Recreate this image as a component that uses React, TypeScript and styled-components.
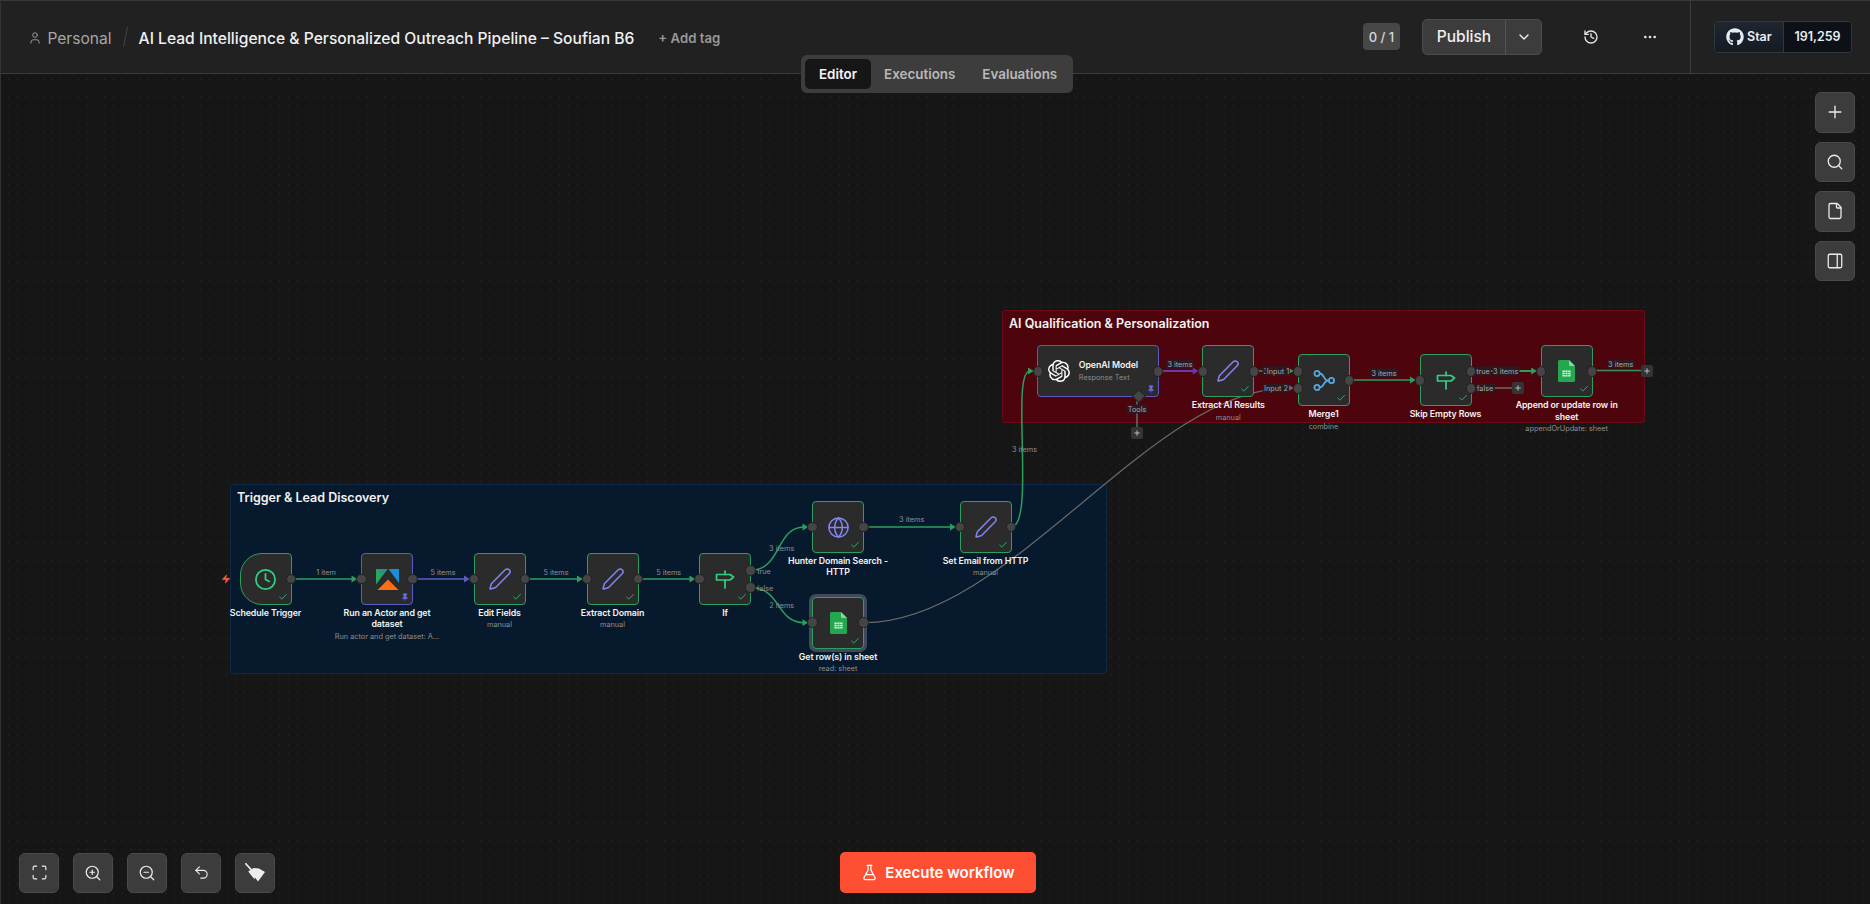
import React from 'react';
import styled, { createGlobalStyle } from 'styled-components';
import { User, ChevronDown, History, Ellipsis, Plus, Search, File, PanelRight, Maximize, ZoomIn, ZoomOut, Undo2, FlaskConical, Clock, Pen, Globe, Pin, Check, Zap } from 'lucide-react';
import { FaGithub } from 'react-icons/fa';
import { SiOpenai } from 'react-icons/si';

const GlobalStyle = createGlobalStyle`
  html, body { margin: 0; padding: 0; background: #161616; }
  body { font-family: Inter, "Noto Sans", sans-serif; overflow: hidden; }
`;

const HEADER_H = 74;
const GREEN = '#2c9f5f';
const PURPLE = '#5c5cc0';
const GRAY = '#6a6a6a';

const Page = styled.div`
  position: relative;
  width: 1870px;
  height: 904px;
  display: flex;
  flex-direction: column;
  overflow: hidden;
  border-left: 1px solid #333;
  box-sizing: border-box;
`;

const Header = styled.header`
  height: ${HEADER_H}px;
  flex: none;
  box-sizing: border-box;
  display: flex;
  align-items: stretch;
  background: #212121;
  border-top: 1px solid #383838;
  border-bottom: 1px solid #3c3c3c;
`;

const HeaderMain = styled.div`
  flex: 1;
  display: flex;
  align-items: center;
  padding-left: 27px;
`;

const Crumbs = styled.div`
  display: flex;
  align-items: center;
  gap: 1px;
  padding-top: 2px;
  color: #a6a6a6;
  font-size: 15.6px;
`;

const Slash = styled.span`
  width: 1px;
  height: 20px;
  margin: 0 13px 0 13px;
  background: #444;
  transform: rotate(11deg);
`;

const Title = styled.div`
  padding-top: 2px;
  color: #f0f0f0;
  font-size: 15.64px;
  font-weight: 500;
  white-space: nowrap;
`;

const AddTag = styled.div`
  margin-left: 24px;
  padding-top: 2px;
  color: #989898;
  font-size: 13.2px;
  font-weight: 600;
`;

const Actions = styled.div`
  margin-left: auto;
  display: flex;
  align-items: center;
  padding-bottom: 1px;
`;

const Count = styled.div`
  width: 37px;
  height: 27px;
  display: flex;
  align-items: center;
  justify-content: center;
  background: #474747;
  border-radius: 4px;
  color: #d8d8d8;
  font-size: 13px;
  font-weight: 500;
  margin-right: 22px;
`;

const PublishGroup = styled.div`
  display: flex;
  height: 36px;
  box-sizing: border-box;
  background: #3c3c3c;
  border: 1px solid #4c4c4c;
  border-radius: 5px;
  color: #f0f0f0;
  margin-right: 37px;
`;

const PublishLabel = styled.div`
  width: 82px;
  display: flex;
  align-items: center;
  justify-content: center;
  font-size: 15.5px;
  font-weight: 500;
`;

const PublishCaret = styled.div`
  width: 35px;
  display: flex;
  align-items: center;
  justify-content: center;
  border-left: 1px solid #555;
`;

const IconSlot = styled.div`
  width: 24px;
  display: flex;
  justify-content: center;
  color: #e6e6e6;
  margin-right: ${p => p.$gap}px;
`;

const StarArea = styled.div`
  width: 180px;
  flex: none;
  box-sizing: border-box;
  border-left: 1px solid #3c3c3c;
  display: flex;
  align-items: center;
  padding-left: 23px;
  padding-bottom: 1px;
`;

const StarBox = styled.div`
  width: 138px;
  height: 32px;
  box-sizing: border-box;
  display: flex;
  border: 1px solid #30363d;
  border-radius: 4px;
  overflow: hidden;
  font-size: 12.5px;
  font-weight: 600;
  color: #e6edf3;
`;

const StarLeft = styled.div`
  width: 69px;
  display: flex;
  align-items: center;
  gap: 3px;
  padding-left: 11px;
  box-sizing: border-box;
  background: linear-gradient(#1f2630, #151b23);
  border-right: 1px solid #30363d;
`;

const StarRight = styled.div`
  flex: 1;
  display: flex;
  align-items: center;
  justify-content: center;
  background: #0d1117;
`;

const Tabs = styled.div`
  position: absolute;
  left: 800px;
  top: 55px;
  width: 272px;
  height: 38px;
  box-sizing: border-box;
  padding: 4px;
  display: flex;
  background: #3d3d3d;
  border-radius: 6px;
  z-index: 5;
`;

const Tab = styled.div`
  height: 30px;
  padding: 0 ${p => p.$pad}px;
  display: flex;
  align-items: center;
  border-radius: 5px;
  font-size: 13.4px;
  font-weight: 600;
  color: ${p => (p.$active ? '#f5f5f5' : '#b8b8b8')};
  background: ${p => (p.$active ? '#161616' : 'transparent')};
`;

const Canvas = styled.main`
  position: relative;
  flex: 1;
  background-color: #161616;
  background-image: radial-gradient(circle, #303030 0.6px, transparent 0.9px);
  background-size: 8.75px 8.75px;
  background-position: 3px 1px;
`;

const Graph = styled.div`
  position: absolute;
  left: -1px;
  top: -${HEADER_H}px;
  width: 1870px;
  height: 904px;
`;

const Placed = styled.div.attrs(p => ({
  style: { left: p.$x, top: p.$y, width: p.$w, height: p.$h },
}))`
  position: absolute;
`;

const Group = styled(Placed)`
  box-sizing: border-box;
  border-radius: 3px;
  background: ${p => p.$bg};
  border: 1px solid ${p => p.$line};
  padding: 5px 6px;
  color: #f2f2f2;
  font-size: 12.5px;
  font-weight: 600;
`;

const EdgeLayer = styled.svg`
  position: absolute;
  left: 0;
  top: 0;
  width: 1870px;
  height: 904px;
  z-index: 2;
  fill: none;
`;

const EdgeLine = styled.path`
  stroke: ${p => p.$color};
  stroke-width: ${p => p.$w || 1.5}px;
  fill: none;
`;

const NodeBox = styled(Placed)`
  box-sizing: border-box;
  z-index: 3;
  display: flex;
  align-items: center;
  justify-content: center;
  background: #2b2b2b;
  border: 1px solid ${p => p.$line};
  border-radius: ${p => (p.$trigger ? '22px 4px 4px 22px' : '4px')};
  ${p => p.$selected && 'box-shadow: 0 0 0 3px #3f4b5c;'}
`;

const Handle = styled.span.attrs(p => ({ style: { top: p.$top } }))`
  position: absolute;
  ${p => (p.$side === 'in' ? 'left: -5.75px;' : 'right: -5.75px;')}
  width: 10.5px;
  height: 10.5px;
  margin-top: -5.25px;
  box-sizing: border-box;
  border-radius: 50%;
  background: #454545;
  border: 1px solid #222;
`;

const Diamond = styled.span`
  position: absolute;
  left: 99.5px;
  bottom: -4.5px;
  width: 7.5px;
  height: 7.5px;
  margin-left: -3.75px;
  background: #454545;
  border: 1px solid #222;
  transform: rotate(45deg);
`;

const Tick = styled.span`
  position: absolute;
  right: 3px;
  bottom: 2px;
  display: flex;
  color: #2fae68;
`;

const PinMark = styled.span`
  position: absolute;
  right: 3px;
  bottom: 3px;
  display: flex;
  color: #6a6ae0;
`;

const NodeCaption = styled.div`
  position: absolute;
  left: 50%;
  top: 100%;
  width: 106px;
  margin-left: -53px;
  padding-top: 3px;
  text-align: center;
`;

const NodeName = styled.div`
  color: #f2f2f2;
  font-size: 8.8px;
  font-weight: 600;
  letter-spacing: -0.1px;
  line-height: 11.3px;
`;

const NodeSub = styled.div`
  color: #8e8e8e;
  font-size: 7.3px;
  line-height: 9px;
  margin-top: 2px;
  white-space: nowrap;
`;

const WideBody = styled.div`
  display: flex;
  align-items: center;
  gap: 8.5px;
  width: 100%;
  padding-left: 10px;
  box-sizing: border-box;
`;

const WideText = styled.div`
  display: flex;
  flex-direction: column;
  gap: 3px;
`;

const WideName = styled.div`
  color: #f2f2f2;
  font-size: 8.8px;
  font-weight: 600;
  letter-spacing: -0.1px;
  line-height: 10px;
`;

const WideSub = styled.div`
  color: #8e8e8e;
  font-size: 7.3px;
  line-height: 9px;
`;

const EdgeLabel = styled.span.attrs(p => ({ style: { left: p.$x, top: p.$y } }))`
  position: absolute;
  z-index: 4;
  transform: translate(-50%, -50%);
  padding: 0 1px;
  font-size: 7.3px;
  line-height: 9px;
  white-space: nowrap;
  color: ${p => (p.$dark ? '#a8a8a8' : '#8f8f8f')};
  background: ${p => (p.$dark ? '#2a1a24' : 'transparent')};
`;

const PlusChip = styled(Placed)`
  z-index: 4;
  display: flex;
  align-items: center;
  justify-content: center;
  background: #343434;
  border-radius: 2px;
  color: #d6d6d6;
`;

const Bolt = styled(Placed)`
  display: flex;
  color: #ff5a3c;
`;

const ToolRail = styled.div`
  position: absolute;
  right: 15px;
  top: 18px;
  display: flex;
  flex-direction: column;
  gap: 9px;
  z-index: 6;
`;

const ToolButton = styled.div`
  width: 40px;
  height: 40.5px;
  box-sizing: border-box;
  display: flex;
  align-items: center;
  justify-content: center;
  background: #3c3c3c;
  border: 1px solid #4a4a4a;
  border-radius: 6px;
  color: #ededed;
`;

const BottomBar = styled.div`
  position: absolute;
  left: 18px;
  bottom: 11px;
  display: flex;
  gap: 14px;
  z-index: 6;
`;

const ExecuteButton = styled.div`
  position: absolute;
  left: 839px;
  bottom: 11px;
  width: 196px;
  height: 41px;
  display: flex;
  align-items: center;
  justify-content: center;
  gap: 7px;
  background: #fe4f32;
  border-radius: 5px;
  color: #fff;
  font-size: 15px;
  font-weight: 600;
  z-index: 6;
`;

const signIcon = (
  <svg width="20" height="19" viewBox="0 0 20 19" fill="none" stroke="#35cf82" strokeWidth="1.7" strokeLinejoin="round" strokeLinecap="round">
    <path d="M1.5 4.5 H15 L18.6 7 L15 10 H1.5 Z" />
    <path d="M10 1 V4.5 M10 10 V18" />
  </svg>
);

const sheetIcon = (
  <svg width="17" height="22" viewBox="0 0 17 22">
    <path d="M1.5 0 H11 L17 6 V20.5 A1.5 1.5 0 0 1 15.5 22 H1.5 A1.5 1.5 0 0 1 0 20.5 V1.5 A1.5 1.5 0 0 1 1.5 0 Z" fill="#23a84f" />
    <path d="M11 0 L17 6 H12.5 A1.5 1.5 0 0 1 11 4.5 Z" fill="#8ed6a5" />
    <path d="M4.5 10.5 H12.5 V16.5 H4.5 Z" fill="#dff3e6" />
    <path d="M4.5 12.5 H12.5 M4.5 14.5 H12.5 M7.2 10.5 V16.5 M9.8 10.5 V16.5" stroke="#23a84f" strokeWidth="0.7" fill="none" />
  </svg>
);

const mergeIcon = (
  <svg width="22" height="21" viewBox="0 0 22 21" fill="none" stroke="#55a9dc" strokeWidth="1.8">
    <circle cx="4" cy="3.5" r="2.6" />
    <circle cx="4" cy="17.5" r="2.6" />
    <circle cx="18.5" cy="10.5" r="2.6" />
    <path d="M6.6 3.5 C12 3.5 9.5 10.5 15.9 10.5 M6.6 17.5 C12 17.5 9.5 10.5 15.9 10.5" />
  </svg>
);

const actorIcon = (
  <svg width="23" height="21" viewBox="0 0 23 21">
    <path d="M0 0 H11.5 L0 15.5 Z" fill="#23a85c" />
    <path d="M0 0 H11.5 L7 6 Z" fill="#2a8f8a" />
    <path d="M12.5 0 H23 V14 Z" fill="#1b8fd6" />
    <path d="M1.5 21 L12 10.5 L22.5 21 Z" fill="#ff6d17" />
  </svg>
);

const broomIcon = (
  <svg width="21" height="19" viewBox="0 0 21 19">
    <path d="M0.8 0.8 L7 7.6" stroke="currentColor" strokeWidth="1.7" strokeLinecap="round" fill="none" />
    <path d="M3.2 8.6 L8.6 5 L14 5.4 L20 9 L13 18.6 L10 14.6 L9.4 16.2 L6.4 12.4 Z" fill="currentColor" />
  </svg>
);

const pen = <Pen size={24} color="#8484f5" strokeWidth={1.5} />;

type NodeData = {
  id: string; x: number; y: number; w?: number; tone?: string; name: string; sub?: string;
  icon: React.ReactNode; ins?: number[]; outs?: number[]; tick?: boolean; pin?: boolean; trigger?: boolean; selected?: boolean;
};

const nodes: NodeData[] = [
  { id: 'schedule', x: 239.5, y: 553, tone: GREEN, name: 'Schedule Trigger', icon: <Clock size={23} color="#35cf82" strokeWidth={1.8} />, outs: [26], tick: true, trigger: true },
  { id: 'actor', x: 361, y: 553, tone: PURPLE, name: 'Run an Actor and get dataset', sub: 'Run actor and get dataset: A...', icon: actorIcon, ins: [26], outs: [26], pin: true },
  { id: 'edit', x: 473.5, y: 553, tone: GREEN, name: 'Edit Fields', sub: 'manual', icon: pen, ins: [26], outs: [26], tick: true },
  { id: 'domain', x: 586.5, y: 553, tone: GREEN, name: 'Extract Domain', sub: 'manual', icon: pen, ins: [26], outs: [26], tick: true },
  { id: 'if', x: 699, y: 553, tone: GREEN, name: 'If', icon: signIcon, ins: [26], outs: [17.5, 34.5], tick: true },
  { id: 'hunter', x: 812, y: 501, tone: GREEN, name: 'Hunter Domain Search - HTTP', icon: <Globe size={23} color="#8484f5" strokeWidth={1.6} />, ins: [26], outs: [26], tick: true },
  { id: 'email', x: 959.5, y: 501, tone: GREEN, name: 'Set Email from HTTP', sub: 'manual', icon: pen, ins: [26], outs: [26], tick: true },
  { id: 'rows', x: 812, y: 596.7, tone: GREEN, name: 'Get row(s) in sheet', sub: 'read: sheet', icon: sheetIcon, ins: [26], outs: [26], tick: true, selected: true },
  { id: 'extract', x: 1202.3, y: 345.3, tone: GREEN, name: 'Extract AI Results', sub: 'manual', icon: pen, ins: [26], outs: [26], tick: true },
  { id: 'merge', x: 1297.5, y: 354.3, tone: GREEN, name: 'Merge1', sub: 'combine', icon: mergeIcon, ins: [17, 34], outs: [26], tick: true },
  { id: 'skip', x: 1419.5, y: 354.3, tone: GREEN, name: 'Skip Empty Rows', icon: signIcon, ins: [26], outs: [17, 34], tick: true },
  { id: 'append', x: 1540.7, y: 345.3, tone: GREEN, name: 'Append or update row in sheet', sub: 'appendOrUpdate: sheet', icon: sheetIcon, ins: [26], outs: [26], tick: true },
];

type Edge = { d: string; color: string; w?: number; tip?: [number, number] };

const edges: Edge[] = [
  { d: 'M291 579 H352', color: GREEN, tip: [361, 579] },
  { d: 'M413 579 H465', color: PURPLE, tip: [473.5, 579] },
  { d: 'M525 579 H578', color: GREEN, tip: [586.5, 579] },
  { d: 'M638 579 H690', color: GREEN, tip: [699, 579] },
  { d: 'M751 570.3 C781 570.3 776 527 804 527', color: GREEN, tip: [812, 527] },
  { d: 'M751 587.7 C781 587.7 776 622.7 804 622.7', color: GREEN, tip: [812, 622.7] },
  { d: 'M864 527 H951', color: GREEN, tip: [959.5, 527] },
  { d: 'M1011 527 C1036 527 1010 371 1030 371', color: GREEN, tip: [1037.5, 371] },
  { d: 'M864 622.7 C1010 622.7 1150 388 1289 388', color: GRAY, w: 1.2, tip: [1297.5, 388] },
  { d: 'M1159 371 H1194', color: '#6f34b0', w: 2, tip: [1202.3, 371] },
  { d: 'M1254 371 H1289', color: GREEN, tip: [1297.5, 371] },
  { d: 'M1349 380 H1411', color: GREEN, tip: [1419.5, 380] },
  { d: 'M1471 371 H1533', color: GREEN, w: 1.8, tip: [1540.7, 371] },
  { d: 'M1471 388 H1512', color: GRAY },
  { d: 'M1593 370.5 H1641', color: '#3f8f5f' },
  { d: 'M1137 400 V427', color: GRAY },
];

const labels: { x: number; y: number; text: string; dark?: boolean }[] = [
  { x: 326, y: 571.7, text: '1 item' },
  { x: 443, y: 571.7, text: '5 items' },
  { x: 556, y: 571.7, text: '5 items' },
  { x: 668.7, y: 571.7, text: '5 items' },
  { x: 781.7, y: 548.3, text: '3 items' },
  { x: 781.7, y: 605.3, text: '2 items' },
  { x: 764, y: 570.5, text: 'true' },
  { x: 765, y: 587.7, text: 'false' },
  { x: 911.7, y: 519.3, text: '3 items' },
  { x: 1024.5, y: 449, text: '3 items' },
  { x: 1180, y: 363.7, text: '3 items', dark: true },
  { x: 1276, y: 370.7, text: '3 items', dark: true },
  { x: 1278, y: 370.7, text: 'Input 1', dark: true },
  { x: 1276, y: 388, text: 'Input 2', dark: true },
  { x: 1137, y: 408.7, text: 'Tools', dark: true },
  { x: 1384, y: 372.7, text: '3 items', dark: true },
  { x: 1483, y: 371, text: 'true', dark: true },
  { x: 1505.7, y: 371, text: '3 items', dark: true },
  { x: 1485, y: 388, text: 'false', dark: true },
  { x: 1620.7, y: 363.7, text: '3 items', dark: true },
];

const chips = [
  { x: 1131, y: 426.7 },
  { x: 1512, y: 382 },
  { x: 1641, y: 364.5 },
];

function GraphNode({ n }: { n: NodeData }) {
  return (
    <NodeBox $x={n.x} $y={n.y} $w={n.w ?? 52} $h={52} $line={n.tone} $trigger={n.trigger} $selected={n.selected}>
      {n.icon}
      {n.ins?.map(t => <Handle key={`i${t}`} $side="in" $top={t - 1} />)}
      {n.outs?.map(t => <Handle key={`o${t}`} $side="out" $top={t - 1} />)}
      {n.tick && <Tick><Check size={10} strokeWidth={2.4} /></Tick>}
      {n.pin && <PinMark><Pin size={8} fill="currentColor" strokeWidth={2} /></PinMark>}
      <NodeCaption>
        <NodeName>{n.name}</NodeName>
        {n.sub && <NodeSub>{n.sub}</NodeSub>}
      </NodeCaption>
    </NodeBox>
  );
}

export default function App() {
  return (
    <Page>
      <GlobalStyle />
      <Header>
        <HeaderMain>
          <Crumbs>
            <User size={14} strokeWidth={1.5} />
            <span>&nbsp;Personal</span>
          </Crumbs>
          <Slash />
          <Title>AI Lead Intelligence &amp; Personalized Outreach Pipeline – Soufian B6</Title>
          <AddTag>+ Add tag</AddTag>
          <Actions>
            <Count>0 / 1</Count>
            <PublishGroup>
              <PublishLabel>Publish</PublishLabel>
              <PublishCaret><ChevronDown size={16} /></PublishCaret>
            </PublishGroup>
            <IconSlot $gap={35}><History size={16} /></IconSlot>
            <IconSlot $gap={28}><Ellipsis size={16} /></IconSlot>
          </Actions>
        </HeaderMain>
        <StarArea>
          <StarBox>
            <StarLeft><FaGithub size={18} color="#e6edf3" />Star</StarLeft>
            <StarRight>191,259</StarRight>
          </StarBox>
        </StarArea>
      </Header>
      <Tabs>
        <Tab $active $pad={14}>Editor</Tab>
        <Tab $pad={13}>Executions</Tab>
        <Tab $pad={14}>Evaluations</Tab>
      </Tabs>
      <Canvas>
        <Graph>
          <Group $x={230} $y={484} $w={877} $h={190} $bg="#071a2d" $line="#0e2a47">Trigger &amp; Lead Discovery</Group>
          <Group $x={1002} $y={310} $w={643} $h={113} $bg="#4e040c" $line="#6b0a14">AI Qualification &amp; Personalization</Group>
          <EdgeLayer viewBox="0 0 1870 904">
            {edges.map(e => (
              <g key={e.d}>
                <EdgeLine d={e.d} $color={e.color} $w={e.w} />
                {e.tip && (
                  <polygon points={`${e.tip[0] - 9.5},${e.tip[1] - 3.4} ${e.tip[0] - 3.8},${e.tip[1]} ${e.tip[0] - 9.5},${e.tip[1] + 3.4}`} fill={e.color} />
                )}
              </g>
            ))}
          </EdgeLayer>
          <Bolt $x={221} $y={574} $w={10} $h={10}><Zap size={10} fill="currentColor" strokeWidth={1} /></Bolt>
          {nodes.map(n => <GraphNode key={n.id} n={n} />)}
          <NodeBox $x={1037.3} $y={345.3} $w={121.4} $h={52} $line={PURPLE}>
            <WideBody>
              <SiOpenai size={22} color="#fff" />
              <WideText>
                <WideName>OpenAI Model</WideName>
                <WideSub>Response Text</WideSub>
              </WideText>
            </WideBody>
            <Handle $side="in" $top={25} />
            <Handle $side="out" $top={25} />
            <Diamond />
            <PinMark><Pin size={8} fill="currentColor" strokeWidth={2} /></PinMark>
          </NodeBox>
          {labels.map(l => <EdgeLabel key={`${l.text}${l.x}`} $x={l.x} $y={l.y} $dark={l.dark}>{l.text}</EdgeLabel>)}
          {chips.map(c => <PlusChip key={c.x} $x={c.x} $y={c.y} $w={12} $h={12}><Plus size={8} strokeWidth={2.4} /></PlusChip>)}
        </Graph>
        <ToolRail>
          <ToolButton><Plus size={20} strokeWidth={1.6} /></ToolButton>
          <ToolButton><Search size={18} strokeWidth={1.7} /></ToolButton>
          <ToolButton><File size={18} strokeWidth={1.7} /></ToolButton>
          <ToolButton><PanelRight size={18} strokeWidth={1.7} /></ToolButton>
        </ToolRail>
        <BottomBar>
          <ToolButton><Maximize size={17} strokeWidth={1.6} /></ToolButton>
          <ToolButton><ZoomIn size={18} strokeWidth={1.6} /></ToolButton>
          <ToolButton><ZoomOut size={18} strokeWidth={1.6} /></ToolButton>
          <ToolButton><Undo2 size={17} strokeWidth={1.6} /></ToolButton>
          <ToolButton>{broomIcon}</ToolButton>
        </BottomBar>
        <ExecuteButton><FlaskConical size={17} strokeWidth={1.7} />Execute workflow</ExecuteButton>
      </Canvas>
    </Page>
  );
}
